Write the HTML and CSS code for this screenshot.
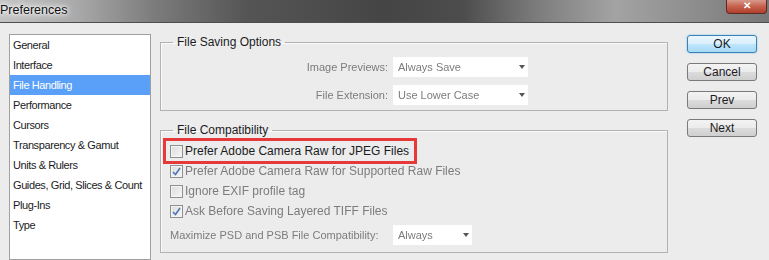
FILE: index.html
```html
<!DOCTYPE html>
<html>
<head>
<meta charset="UTF-8">
<title>Preferences</title>
<link rel="stylesheet" href="styles.css">
</head>
<body>
  <div class="titlebar">
    <span class="title">Preferences</span>
    <span class="close">&#x2715;</span>
  </div>
  <div class="main">
    <ul class="cats">
      <li>General</li>
      <li>Interface</li>
      <li class="sel">File Handling</li>
      <li>Performance</li>
      <li>Cursors</li>
      <li>Transparency &amp; Gamut</li>
      <li>Units &amp; Rulers</li>
      <li>Guides, Grid, Slices &amp; Count</li>
      <li>Plug-Ins</li>
      <li>Type</li>
    </ul>

    <div class="panel">
      <fieldset class="group saving">
        <legend>File Saving Options</legend>
        <div class="row">
          <span class="lbl right soft">Image Previews:</span>
          <span class="drop wide soft">Always Save</span>
        </div>
        <div class="row">
          <span class="lbl right soft">File Extension:</span>
          <span class="drop wide soft">Use Lower Case</span>
        </div>
      </fieldset>

      <fieldset class="group compat">
        <legend>File Compatibility</legend>
        <div class="check marked">
          <span class="box"></span>
          <span>Prefer Adobe Camera Raw for JPEG Files</span>
        </div>
        <div class="check soft">
          <span class="box"><svg viewBox="0 0 11 11"><path d="M2 6 L4.5 8.5 L9 2" /></svg></span>
          <span>Prefer Adobe Camera Raw for Supported Raw Files</span>
        </div>
        <div class="check soft">
          <span class="box"></span>
          <span>Ignore EXIF profile tag</span>
        </div>
        <div class="check soft">
          <span class="box"><svg viewBox="0 0 11 11"><path d="M2 6 L4.5 8.5 L9 2" /></svg></span>
          <span>Ask Before Saving Layered TIFF Files</span>
        </div>
        <div class="row maxrow">
          <span class="lbl small soft">Maximize PSD and PSB File Compatibility:</span>
          <span class="drop narrow soft">Always</span>
        </div>
      </fieldset>
    </div>

    <div class="buttons">
      <button class="btn ok">OK</button>
      <button class="btn">Cancel</button>
      <button class="btn">Prev</button>
      <button class="btn">Next</button>
    </div>
  </div>
</body>
</html>
```

FILE: styles.css
```css
html, body {
  margin: 0;
  padding: 0;
  height: 260px;
  overflow: hidden;
  background: #ececec;
  font-family: 'Liberation Sans', Arial, sans-serif;
  font-size: 12px;
  color: #1b1b24;
}

.titlebar {
  height: 22px;
  border-bottom: 1px solid #4e4e4e;
  display: flex;
  justify-content: space-between;
  align-items: flex-start;
  background: linear-gradient(90deg, #c4c4c4 0%, #a9a9a9 10%, #7c7c7c 20%, #555 32%, #454545 50%, #4c4c4c 60%, #7d7d7d 70%, #a3a3a3 80%, #8e8e8e 90%, #777 100%);
}
.title {
  font-size: 12.5px;
  line-height: 20px;
  color: #111;
  text-shadow: 0 0 6px #fff, 0 0 10px #fff, 0 0 3px #fff;
}
.close {
  width: 39px;
  height: 13px;
  margin-right: 2px;
  border: 1px solid #5e2a22;
  border-top: none;
  border-radius: 0 0 4px 4px;
  background: linear-gradient(#d99a8c, #c5614d 50%, #b0402c);
  color: #fff;
  font-size: 10px;
  line-height: 12px;
  text-align: center;
  font-weight: bold;
}

.main {
  display: flex;
  align-items: flex-start;
  padding: 11px 0 0 9px;
}

.cats {
  list-style: none;
  margin: 0;
  padding: 0;
  width: 140px;
  height: 224px;
  background: #fff;
  border: 1px solid #a0a0a0;
  font-size: 11px;
  letter-spacing: -0.4px;
}
.cats li {
  height: 20px;
  line-height: 20px;
  padding-left: 3px;
  white-space: nowrap;
}
.cats li.sel {
  background: #5aa0f8;
  color: #fff;
}

.panel {
  width: 508px;
  margin-left: 9px;
}

.group {
  margin: 0;
  padding: 0 5px;
  border: 1px solid #b2b2b2;
  box-shadow: inset 1px 1px 0 #fafafa;
}
.group legend {
  margin-left: 7px;
  padding: 0 4px;
  line-height: 16px;
  font-size: 12px;
}
.saving {
  padding-top: 7px;
  padding-bottom: 5px;
}
.compat {
  margin-top: 11px;
  padding-top: 3px;
  padding-bottom: 7px;
}

.row {
  display: flex;
  align-items: center;
  height: 20px;
  gap: 5px;
}
.row + .row {
  margin-top: 8px;
}
.lbl {
  width: 222px;
  font-size: 11px;
  white-space: nowrap;
}
.lbl.right {
  text-align: right;
}
.lbl.small {
  padding-left: 4px;
  box-sizing: border-box;
}
.drop {
  box-sizing: border-box;
  height: 20px;
  line-height: 20px;
  padding-left: 5px;
  background: #fff;
  font-size: 11px;
  display: flex;
  justify-content: space-between;
  align-items: center;
}
.drop::after {
  content: "";
  border-left: 3px solid transparent;
  border-right: 3px solid transparent;
  border-top: 4px solid #555;
  margin-right: 3px;
}
.drop.wide { width: 135px; }
.drop.narrow { width: 79px; }
.maxrow { margin-top: 4px; }

.soft {
  color: #7c7c7c;
  filter: blur(0.6px);
}

.check {
  display: flex;
  align-items: center;
  height: 20px;
  padding-left: 4px;
  gap: 2px;
  white-space: nowrap;
}
.check.marked {
  width: 244px;
  outline: 3px solid #e6393a;
  outline-offset: 0;
}
.box {
  width: 11px;
  height: 11px;
  border: 1px solid #8e8f8f;
  background: linear-gradient(135deg, #dcdcdc, #f6f6f6);
  box-shadow: inset 0 0 0 1px #f4f4f4;
  display: flex;
}
.box svg {
  width: 11px;
  height: 11px;
  fill: none;
  stroke: #5077b6;
  stroke-width: 1.6;
}

.buttons {
  margin-left: 19px;
  margin-top: 1px;
  display: flex;
  flex-direction: column;
  gap: 10px;
}
.btn {
  width: 70px;
  height: 18px;
  padding: 0;
  border: 1px solid #7a7a7a;
  border-radius: 3px;
  background: linear-gradient(#f3f3f3 0%, #ebebeb 50%, #dcdcdc 51%, #cfcfcf 100%);
  font-family: 'Liberation Sans', Arial, sans-serif;
  font-size: 12px;
  color: #1b1b24;
  line-height: 16px;
}
.btn.ok {
  border-color: #3c7fb1;
  background: linear-gradient(#eaf6fd 0%, #d9f0fc 50%, #bee6fd 51%, #a7d9f5 100%);
  box-shadow: 0 0 2px #6ec3f0;
}
```
